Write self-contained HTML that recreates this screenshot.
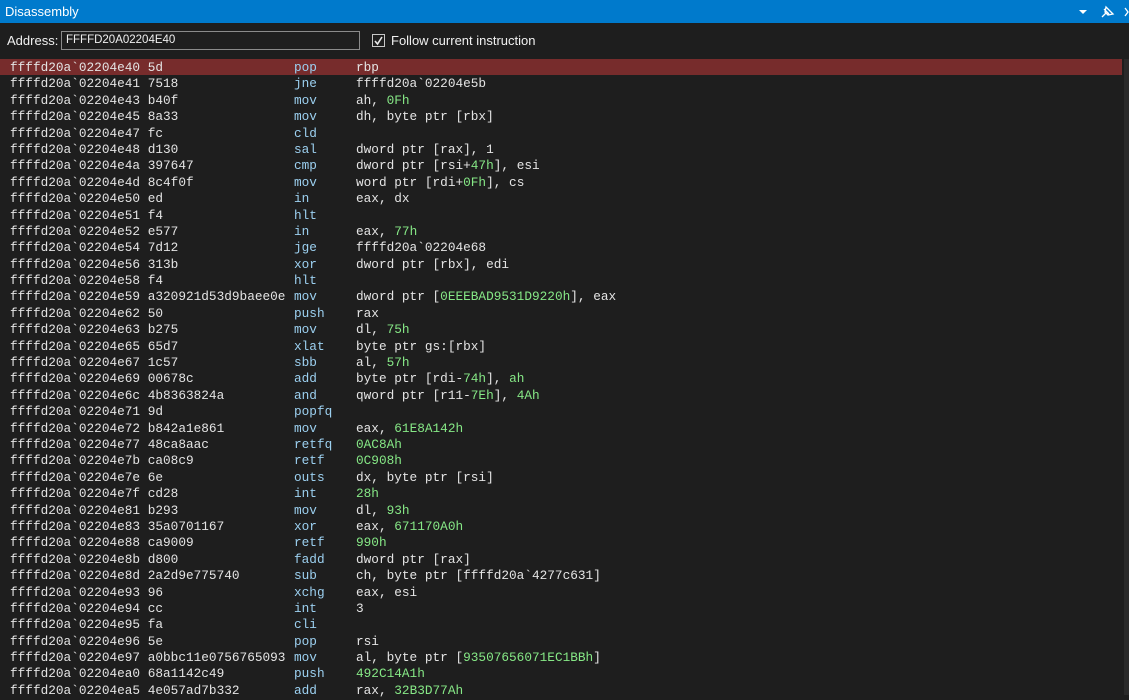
<!DOCTYPE html>
<html><head><style>
body{margin:0;width:1129px;height:695px;background:#1e1e1e;overflow:hidden;font-family:"Liberation Sans",sans-serif;position:relative}
.title{position:absolute;left:0;top:0;width:1129px;height:23px;background:#007acc;color:#fff;font-size:13px;line-height:23px;padding-left:5px;box-sizing:border-box}
.lbl{position:absolute;top:33px;color:#f0f0f0;font-size:13px}
.addr{position:absolute;left:61px;top:31px;width:299px;height:19px;border:1px solid #8a8a8a;box-sizing:border-box;color:#f0f0f0;font-size:11.5px;line-height:17px;padding-left:4px}
.cb{position:absolute;left:372px;top:34px;width:13px;height:13px;border:1px solid #c8c8c8;box-sizing:border-box}
#rows{position:absolute;left:0;top:59px;width:1122px;font-family:"Liberation Mono",monospace;font-size:12.75px;color:#e4e4e4}
.r{position:relative;height:16.4px;line-height:18px;white-space:pre}
.r span{position:absolute;top:0}
.a{left:10px}.m{left:294px;color:#9cd0f0}.o{left:356px}
.n,.o i{color:#86e886;font-style:normal}
.hl{background:#772c2c}
.sb{position:absolute;left:1124px;top:59px;width:5px;height:636px;background:#2a2a2a}
</style></head><body>
<div class="title">Disassembly</div>
<svg style="position:absolute;left:1077px;top:5px" width="52" height="14"><path d="M2 5h8l-4 4z" fill="#fff"/><path d="M25 12l4-4M27 4l5 5M29 2l-1 5 3 3 5-1z" stroke="#fff" fill="none" stroke-width="1.3"/><path d="M48 3l3 4-3 4" stroke="#fff" fill="none" stroke-width="1.3"/></svg>
<div class="lbl" style="left:7px">Address:</div>
<div class="addr">FFFFD20A02204E40</div>
<div class="cb"><svg width="11" height="11" style="position:absolute;left:0;top:0"><path d="M2 6l2.5 3L9 2" stroke="#e8e8e8" stroke-width="1.6" fill="none"/></svg></div>
<div class="lbl" style="left:391px">Follow current instruction</div>
<div class="sb"></div>
<div id="rows">
<div class="r hl"><span class="a">ffffd20a`02204e40 5d</span><span class="m">pop</span><span class="o">rbp</span></div>
<div class="r"><span class="a">ffffd20a`02204e41 7518</span><span class="m">jne</span><span class="o">ffffd20a`02204e5b</span></div>
<div class="r"><span class="a">ffffd20a`02204e43 b40f</span><span class="m">mov</span><span class="o">ah, <i>0Fh</i></span></div>
<div class="r"><span class="a">ffffd20a`02204e45 8a33</span><span class="m">mov</span><span class="o">dh, byte ptr [rbx]</span></div>
<div class="r"><span class="a">ffffd20a`02204e47 fc</span><span class="m">cld</span></div>
<div class="r"><span class="a">ffffd20a`02204e48 d130</span><span class="m">sal</span><span class="o">dword ptr [rax], 1</span></div>
<div class="r"><span class="a">ffffd20a`02204e4a 397647</span><span class="m">cmp</span><span class="o">dword ptr [rsi+<i>47h</i>], esi</span></div>
<div class="r"><span class="a">ffffd20a`02204e4d 8c4f0f</span><span class="m">mov</span><span class="o">word ptr [rdi+<i>0Fh</i>], cs</span></div>
<div class="r"><span class="a">ffffd20a`02204e50 ed</span><span class="m">in</span><span class="o">eax, dx</span></div>
<div class="r"><span class="a">ffffd20a`02204e51 f4</span><span class="m">hlt</span></div>
<div class="r"><span class="a">ffffd20a`02204e52 e577</span><span class="m">in</span><span class="o">eax, <i>77h</i></span></div>
<div class="r"><span class="a">ffffd20a`02204e54 7d12</span><span class="m">jge</span><span class="o">ffffd20a`02204e68</span></div>
<div class="r"><span class="a">ffffd20a`02204e56 313b</span><span class="m">xor</span><span class="o">dword ptr [rbx], edi</span></div>
<div class="r"><span class="a">ffffd20a`02204e58 f4</span><span class="m">hlt</span></div>
<div class="r"><span class="a">ffffd20a`02204e59 a320921d53d9baee0e</span><span class="m">mov</span><span class="o">dword ptr [<i>0EEEBAD9531D9220h</i>], eax</span></div>
<div class="r"><span class="a">ffffd20a`02204e62 50</span><span class="m">push</span><span class="o">rax</span></div>
<div class="r"><span class="a">ffffd20a`02204e63 b275</span><span class="m">mov</span><span class="o">dl, <i>75h</i></span></div>
<div class="r"><span class="a">ffffd20a`02204e65 65d7</span><span class="m">xlat</span><span class="o">byte ptr gs:[rbx]</span></div>
<div class="r"><span class="a">ffffd20a`02204e67 1c57</span><span class="m">sbb</span><span class="o">al, <i>57h</i></span></div>
<div class="r"><span class="a">ffffd20a`02204e69 00678c</span><span class="m">add</span><span class="o">byte ptr [rdi-<i>74h</i>], <i>ah</i></span></div>
<div class="r"><span class="a">ffffd20a`02204e6c 4b8363824a</span><span class="m">and</span><span class="o">qword ptr [r11-<i>7Eh</i>], <i>4Ah</i></span></div>
<div class="r"><span class="a">ffffd20a`02204e71 9d</span><span class="m">popfq</span></div>
<div class="r"><span class="a">ffffd20a`02204e72 b842a1e861</span><span class="m">mov</span><span class="o">eax, <i>61E8A142h</i></span></div>
<div class="r"><span class="a">ffffd20a`02204e77 48ca8aac</span><span class="m">retfq</span><span class="o n">0AC8Ah</span></div>
<div class="r"><span class="a">ffffd20a`02204e7b ca08c9</span><span class="m">retf</span><span class="o n">0C908h</span></div>
<div class="r"><span class="a">ffffd20a`02204e7e 6e</span><span class="m">outs</span><span class="o">dx, byte ptr [rsi]</span></div>
<div class="r"><span class="a">ffffd20a`02204e7f cd28</span><span class="m">int</span><span class="o n">28h</span></div>
<div class="r"><span class="a">ffffd20a`02204e81 b293</span><span class="m">mov</span><span class="o">dl, <i>93h</i></span></div>
<div class="r"><span class="a">ffffd20a`02204e83 35a0701167</span><span class="m">xor</span><span class="o">eax, <i>671170A0h</i></span></div>
<div class="r"><span class="a">ffffd20a`02204e88 ca9009</span><span class="m">retf</span><span class="o n">990h</span></div>
<div class="r"><span class="a">ffffd20a`02204e8b d800</span><span class="m">fadd</span><span class="o">dword ptr [rax]</span></div>
<div class="r"><span class="a">ffffd20a`02204e8d 2a2d9e775740</span><span class="m">sub</span><span class="o">ch, byte ptr [ffffd20a`4277c631]</span></div>
<div class="r"><span class="a">ffffd20a`02204e93 96</span><span class="m">xchg</span><span class="o">eax, esi</span></div>
<div class="r"><span class="a">ffffd20a`02204e94 cc</span><span class="m">int</span><span class="o">3</span></div>
<div class="r"><span class="a">ffffd20a`02204e95 fa</span><span class="m">cli</span></div>
<div class="r"><span class="a">ffffd20a`02204e96 5e</span><span class="m">pop</span><span class="o">rsi</span></div>
<div class="r"><span class="a">ffffd20a`02204e97 a0bbc11e0756765093</span><span class="m">mov</span><span class="o">al, byte ptr [<i>93507656071EC1BBh</i>]</span></div>
<div class="r"><span class="a">ffffd20a`02204ea0 68a1142c49</span><span class="m">push</span><span class="o n">492C14A1h</span></div>
<div class="r"><span class="a">ffffd20a`02204ea5 4e057ad7b332</span><span class="m">add</span><span class="o">rax, <i>32B3D77Ah</i></span></div>
</div>
</body></html>
